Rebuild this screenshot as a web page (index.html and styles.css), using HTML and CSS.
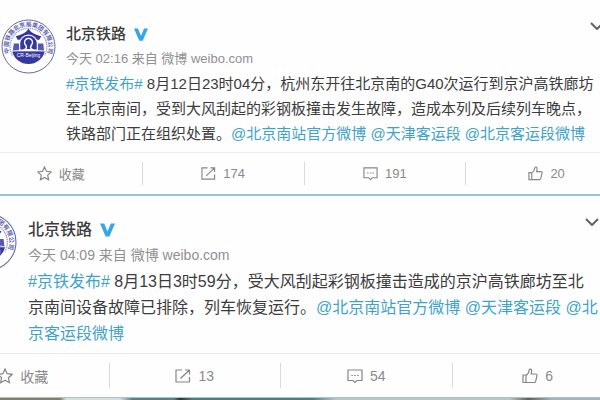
FILE: index.html
```
<!DOCTYPE html>
<html lang="zh-CN">

<head>
    <meta charset="UTF-8">
    <title>北京铁路</title>
    <link rel="stylesheet" href="styles.css">
</head>

<body>
    <!-- shared icons -->
    <svg class="sprite" aria-hidden="true">
        <symbol id="logo" viewBox="0 0 56 56">
            <circle cx="28" cy="28" r="27" fill="#fff" stroke="#6264ac" stroke-width="1"/>
            <path id="ring" d="M8.600 34.700A20.500 20.500 0 1 1 47.400 34.700" fill="none"/>
            <text class="logo-ring"><textPath href="#ring">中国铁路北京局集团有限公司</textPath></text>
            <path d="M11.500 37A18.700 18.700 0 1 1 44.500 37" fill="none" stroke="#9a9bcb" stroke-width="1.400" stroke-dasharray="1.200 .7"/>
            <path d="M11.500 33a17 17 0 0 0 33 0z" fill="#34389f"/>
            <path d="M12 33l1-8h30l1 8z" fill="#5557b0"/>
            <path d="M28 10l2.500 3c3 2.500 7 3.500 10.500 4.500L39 21H17l-2-3.500c3.500-1 7.500-2 10.500-4.500z" fill="#34389f"/>
            <path d="M19 32v-7a9 8.500 0 0 1 18 0v7z" fill="#34389f" stroke="#fff" stroke-width="1.200"/>
            <path d="M23 31.500c4-1 3-3.500 2-5a4 4 0 1 1 6 0c-1 1.500-2 4 2 5z" fill="#34389f" stroke="#fff" stroke-width="1.500"/>
            <path d="M12 32.500q16-3 32 0" fill="none" stroke="#fff" stroke-width=".8"/>
            <text x="28" y="39" text-anchor="middle" class="logo-text">CR·Beijing</text>
        </symbol>
        <symbol id="vip" viewBox="0 0 16 14">
            <path d="M0 0h4.500L8 8.500 11.500 0H16L10 14H6z" fill="#36a7e4"/>
        </symbol>
        <symbol id="down" viewBox="0 0 14 8">
            <path d="M1 1l6 6 6-6" fill="none" stroke="#62626a" stroke-width="2"/>
        </symbol>
        <symbol id="star" viewBox="0 0 16 16">
            <path d="M8 1l2.100 4.700 5.100.6-3.800 3.400 1 5L8 12.200l-4.400 2.500 1-5L.8 6.300l5.100-.6z"/>
        </symbol>
        <symbol id="share" viewBox="0 0 16 16">
            <path d="M7 2H1v12h13.500V9M5.500 10.500L14.500 2M10 2h4.500v4.500"/>
        </symbol>
        <symbol id="comment" viewBox="0 0 16 16">
            <path d="M1 2h14v10.500h-5l-2 2-2-2H1z"/>
            <path d="M4.300 7.500h1.600M7.200 7.500h1.600M10.100 7.500h1.600"/>
        </symbol>
        <symbol id="like" viewBox="0 0 16 16">
            <path d="M1 7h3v7.500H1zM4 7.500C6.700 6 7 4 7.200 2c.2-1.500 2.500-1.200 2.500 1 0 1.500-.5 2-.5 3h4.600c1 0 1.400.8 1.200 1.600l-1.300 5.600c-.3.900-.8 1.300-1.600 1.300H4"/>
        </symbol>
    </svg>

    <article class="post">
        <div class="post-main">
            <svg class="avatar"><use href="#logo"/></svg>
            <div class="post-body">
                <header class="post-header">
                    <h2 class="name">北京铁路</h2>
                    <svg class="vip"><use href="#vip"/></svg>
                    <button class="more" aria-label="更多"><svg><use href="#down"/></svg></button>
                </header>
                <p class="meta">今天 02:16 来自 微博 weibo.com</p>
                <p class="content"><a href="#">#京铁发布#</a> 8月12日23时04分，杭州东开往北京南的G40次运行到京沪高铁廊坊<br>至北京南间，受到大风刮起的彩钢板撞击发生故障，造成本列及后续列车晚点，<br>铁路部门正在组织处置。<a href="#">@北京南站官方微博</a> <a href="#">@天津客运段</a> <a href="#">@北京客运段微博</a></p>
            </div>
        </div>
        <footer class="actions">
            <div class="actions-row">
                <button class="action"><svg><use href="#star"/></svg>收藏</button>
                <button class="action"><svg><use href="#share"/></svg>174</button>
                <button class="action"><svg><use href="#comment"/></svg>191</button>
                <button class="action"><svg><use href="#like"/></svg>20</button>
            </div>
        </footer>
    </article>

    <article class="post post-large">
        <div class="post-main">
            <svg class="avatar"><use href="#logo"/></svg>
            <div class="post-body">
                <header class="post-header">
                    <h2 class="name">北京铁路</h2>
                    <svg class="vip"><use href="#vip"/></svg>
                    <button class="more" aria-label="更多"><svg><use href="#down"/></svg></button>
                </header>
                <p class="meta">今天 04:09 来自 微博 weibo.com</p>
                <p class="content"><a href="#">#京铁发布#</a> 8月13日3时59分，受大风刮起彩钢板撞击造成的京沪高铁廊坊至北<br>京南间设备故障已排除，列车恢复运行。<a href="#">@北京南站官方微博</a> <a href="#">@天津客运段</a> <a href="#">@北<br>京客运段微博</a></p>
            </div>
        </div>
        <footer class="actions">
            <div class="actions-row">
                <button class="action"><svg><use href="#star"/></svg>收藏</button>
                <button class="action"><svg><use href="#share"/></svg>13</button>
                <button class="action"><svg><use href="#comment"/></svg>54</button>
                <button class="action"><svg><use href="#like"/></svg>6</button>
            </div>
        </footer>
    </article>
    <div class="photo-edge"></div>
</body>

</html>
```
FILE: styles.css
```
body {
    margin: 0;
    background: #fefefe;
    color: #3c3c3c;
    font-family: "Liberation Sans", "Noto Sans CJK SC", sans-serif;
    overflow: hidden;
}

h2, p {
    margin: 0;
}

a {
    color: #3fa3c9;
    text-decoration: none;
}

button {
    border: 0;
    padding: 0;
    background: none;
    font-family: inherit;
    cursor: pointer;
}

.sprite {
    position: absolute;
    width: 0;
    height: 0;
}

.logo-text {
    font-size: 5px;
    fill: #fff;
}

.logo-ring {
    font-size: 6px;
    font-weight: bold;
    fill: #6163b2;
}

.post {
    border-bottom: 2px solid #8fc8de;
    overflow: hidden;
}

.post-main {
    display: flex;
    gap: 10px;
    padding: 19px 0 6px 1px;
}

.avatar {
    flex: none;
    width: 55px;
    height: 55px;
}

.post-body {
    flex: 1;
    padding-top: 3px;
}

.post-header {
    display: flex;
    align-items: center;
    height: 24px;
}

.name {
    font-size: 15px;
    font-weight: 500;
    line-height: 24px;
}

.vip {
    width: 14px;
    height: 13px;
    margin-left: 8px;
}

.more {
    display: flex;
    align-self: flex-start;
    margin: 0 -4px 0 auto;
}

.more svg {
    width: 14px;
    height: 8px;
}

.meta {
    color: #909090;
    font-size: 13px;
    line-height: 25px;
}

.content {
    font-size: 15px;
    line-height: 25px;
    white-space: nowrap;
}

.actions {
    border-top: 1px solid #ececec;
    padding: 9px 0;
}

/* the row runs past both screen edges */
.actions-row {
    display: grid;
    grid-template-columns: repeat(4, 1fr);
    margin: 0 -27px 0 -20px;
}

.action {
    display: flex;
    align-items: center;
    justify-content: center;
    gap: 7px;
    height: 23px;
    color: #8a8a8a;
    font-size: 13px;
}

.action + .action {
    border-left: 1px solid #d9d9d9;
}

.action svg {
    width: 15px;
    height: 15px;
    fill: none;
    stroke: #858585;
    stroke-width: 1.2;
}

.post-large {
    border-bottom-width: 1px;
    border-color: #a3c7cf;
}

.post-large .post-main {
    gap: 11px;
    padding: 17px 0 6px;
    margin-left: -41px;
}

.post-large .post-body {
    padding-top: 5px;
}

.post-large .avatar {
    width: 58px;
    height: 58px;
}

.post-large .name,
.post-large .content {
    font-size: 16px;
}

.post-large .content {
    line-height: 26px;
}

.post-large .vip {
    width: 15px;
    height: 14px;
}

.post-large .more {
    margin-right: 1px;
}

.post-large .meta,
.post-large .action {
    font-size: 14px;
}

.post-large .meta {
    line-height: 27px;
}

.post-large .actions-row {
    margin: 0 -23px 0 -63px;
}

.post-large .action {
    height: 25px;
}

.post-large .action svg {
    width: 16px;
    height: 16px;
}

.photo-edge {
    height: 2px;
    background: linear-gradient(90deg, #8c7a62 0 10%, #d8dedc 11% 20%, #5d7f80 22% 29%, #2f3333 30%, #4c7d80 32% 52%, #b9c6c6 56% 85%, #6b5e5a 88%, #a8b4b4 92%);
}
```
